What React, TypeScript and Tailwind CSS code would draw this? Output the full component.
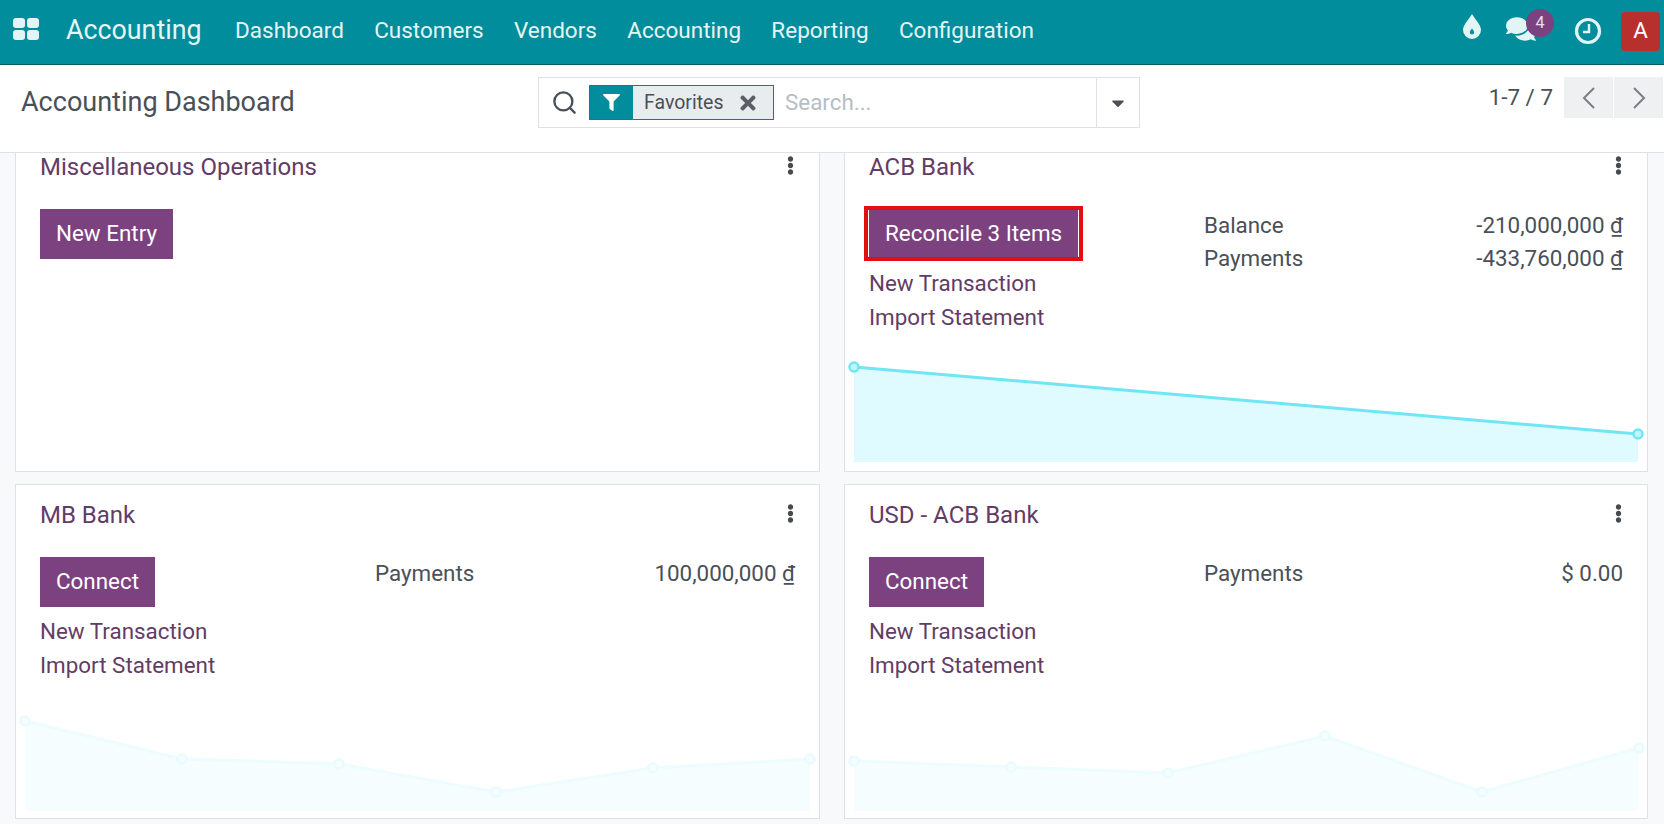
import React from "react";
import { Search } from "lucide-react";
import { FaComments, FaFilter, FaTimes, FaCaretDown, FaEllipsisV } from "react-icons/fa";

const menu = ["Dashboard", "Customers", "Vendors", "Accounting", "Reporting", "Configuration"];

type Pt = [number, number];

const Chart = ({ points, faded }: { points: Pt[]; faded?: boolean }) => {
  const line = points.map((p) => p.join(",")).join(" ");
  const last = points[points.length - 1];
  const area = `${points[0][0]},100 ${line} ${last[0]},100`;
  return (
    <svg width="786" height="100" viewBox="0 0 786 100" className="shrink-0 overflow-visible">
      <g opacity={faded ? 0.3 : 1}>
        <polygon points={area} fill="#dffbff" />
        <polyline points={line} fill="none" stroke={faded ? "#c5f6fc" : "#6ee6f4"} strokeWidth="3" />
        {points.map((p, i) => (
          <circle
            key={i}
            cx={p[0]}
            cy={p[1]}
            r="4.5"
            fill={faded ? "#dffbff" : "#c0f5fc"}
            stroke={faded ? "#b5f3fb" : "#6ee6f4"}
            strokeWidth="2.5"
          />
        ))}
      </g>
    </svg>
  );
};

const Stat = ({ label, value }: { label: string; value: string }) => (
  <div className="flex justify-between h-[33px] items-center text-[#495057]">
    <span>{label}</span>
    <span>{value}</span>
  </div>
);

type CardProps = {
  title: string;
  button: string;
  stats?: { label: string; value: string }[];
  links?: boolean;
  marked?: boolean;
  clipped?: boolean;
  chart?: Pt[];
  faded?: boolean;
};

const Card = ({ title, button, stats, links, marked, clipped, chart, faded }: CardProps) => (
  <div
    className={`flex flex-col bg-white border border-[#dee2e6] ${clipped ? "h-[319px] border-t-0" : "h-[335px] pt-[16px]"}`}
  >
    <div className="flex justify-between items-center h-[28px] pl-[24px] pr-[19px] text-[24px] text-[#633c66] shrink-0">
      <span>{title}</span>
      <FaEllipsisV className="text-[#454a4f] text-[19px] mb-[4px]" />
    </div>
    <div className="flex pl-[24px] pr-[24px] mt-[28px]">
      <div className="w-[335px] shrink-0">
        <div className="relative w-fit">
          <button className="block h-[50px] px-[16px] bg-[#7c4280] text-white">{button}</button>
          {marked && <div className="absolute -inset-x-[5px] -top-[3px] -bottom-[2px] border-4 border-[#e30d14]" />}
        </div>
        {links && (
          <div className="mt-[8px] text-[#633c66]">
            <div className="h-[34px] flex items-center">New Transaction</div>
            <div className="h-[34px] flex items-center">Import Statement</div>
          </div>
        )}
      </div>
      {stats && (
        <div className="flex-1">
          {stats.map((s) => (
            <Stat key={s.label} label={s.label} value={s.value} />
          ))}
        </div>
      )}
    </div>
    {chart && (
      <div className={`mt-auto pl-[9px] ${clipped ? "pb-[9px]" : "pb-[7px]"}`}>
        <Chart points={chart} faded={faded} />
      </div>
    )}
  </div>
);

export default function App() {
  return (
    <div className="h-[824px] w-[1664px] overflow-hidden flex flex-col bg-[#f8f9fa] font-['Roboto',sans-serif] text-[22.4px]">
      <nav className="h-[65px] shrink-0 flex items-center bg-[#018d9b] border-b border-[#0a5a63] text-[#e6f5f6]">
        <div className="grid grid-cols-2 gap-[2px] w-[26px] h-[22px] ml-[13px] mb-[6px]">
          <span className="bg-[#e3f4f5] rounded-[3px]" />
          <span className="bg-[#e3f4f5] rounded-[3px]" />
          <span className="bg-[#e3f4f5] rounded-[3px]" />
          <span className="bg-[#e3f4f5] rounded-[3px]" />
        </div>
        <span className="ml-[27px] text-[26.8px] leading-none mb-[3px]">Accounting</span>
        <div className="flex gap-[30.3px] ml-[33.5px] mb-[3px] text-[22.5px]">
          {menu.map((m) => (
            <span key={m}>{m}</span>
          ))}
        </div>
        <div className="ml-auto flex items-center mb-[2px]">
          <svg width="20" height="26" viewBox="0 0 20 26" fill="#e3f4f5" className="mb-[10px]">
            <path
              fillRule="evenodd"
              d="M10 1C13 6.5 19 11.5 19 17a9 9 0 0 1-18 0C1 11.5 7 6.5 10 1ZM10 15.5c-1 1.6-2.2 2.6-2.2 3.8a2.2 2.2 0 0 0 4.4 0c0-1.2-1.2-2.2-2.2-3.8Z"
            />
          </svg>
          <div className="relative ml-[24px] mb-[4px]">
            <FaComments className="text-[#e3f4f5] text-[30px]" />
            <span className="absolute -top-[5px] left-[20px] w-[28px] h-[28px] rounded-full bg-[#7c4280] text-[#e6e0ea] text-[16px] flex items-center justify-center">
              4
            </span>
          </div>
          <svg width="28" height="28" viewBox="0 0 28 28" fill="none" stroke="#e3f4f5" className="ml-[38px]">
            <circle cx="14" cy="14" r="11.5" strokeWidth="3.2" />
            <path d="M15 7v8H9" strokeWidth="2.4" />
          </svg>
          <div className="ml-[19px] mr-[4px] w-[39px] h-[39px] rounded-[4px] bg-[#b8302e] text-white flex items-center justify-center">
            A
          </div>
        </div>
      </nav>

      <div className="h-[88px] shrink-0 flex bg-white border-b border-[#dee2e6] text-[#495057]">
        <div className="w-[538px] pl-[21px] pt-[18px] text-[27px] leading-[38px]">Accounting Dashboard</div>
        <div className="w-[602px] h-[51px] mt-[12px] flex border border-[#dee2e6]">
          <div className="flex-1 flex items-center pl-[12px]">
            <Search size={27} strokeWidth={2.1} className="text-[#495057]" />
            <div className="ml-[11px] h-[35px] flex border border-[#0f7f8d] text-[19.5px]">
              <span className="w-[43px] bg-[#018d9b] flex items-center justify-center">
                <FaFilter className="text-white text-[17px]" />
              </span>
              <span className="w-[140px] bg-[#e9ecef] flex items-center pl-[11px]">
                Favorites
                <FaTimes className="ml-[14px] text-[#5a6066] text-[22px]" />
              </span>
            </div>
            <span className="ml-[11px] text-[#b7bdc3]">Search...</span>
          </div>
          <div className="w-[43px] border-l border-[#dee2e6] flex items-center justify-center">
            <FaCaretDown className="text-[#495057] text-[20px]" />
          </div>
        </div>
        <div className="ml-auto flex pt-[12px] h-[53px]">
          <span className="mr-[11px] leading-[40px]">1-7 / 7</span>
          <div className="w-[49px] h-[41px] bg-[#eef0f1] flex items-center justify-center">
            <svg width="16" height="24" viewBox="0 0 16 24" fill="none" stroke="#7b7f83" strokeWidth="2">
              <path d="M13 2 3 12l10 10" />
            </svg>
          </div>
          <div className="w-[49px] h-[41px] ml-[1px] mr-[1px] bg-[#eef0f1] flex items-center justify-center">
            <svg width="16" height="24" viewBox="0 0 16 24" fill="none" stroke="#7b7f83" strokeWidth="2">
              <path d="m3 2 10 10L3 22" />
            </svg>
          </div>
        </div>
      </div>

      <div className="grid grid-cols-[805px_804px] gap-x-[24px] gap-y-[12px] pl-[15px] content-start">
        <Card title="Miscellaneous Operations" button="New Entry" clipped />
        <Card
          title="ACB Bank"
          button="Reconcile 3 Items"
          marked
          links
          clipped
          stats={[
            { label: "Balance", value: "-210,000,000 ₫" },
            { label: "Payments", value: "-433,760,000 ₫" },
          ]}
          chart={[
            [0, 5],
            [784, 72],
          ]}
        />
        <Card
          title="MB Bank"
          button="Connect"
          links
          stats={[{ label: "Payments", value: "100,000,000 ₫" }]}
          faded
          chart={[
            [0, 10],
            [157, 48],
            [314, 53],
            [471, 81],
            [628, 57],
            [785, 48],
          ]}
        />
        <Card
          title="USD - ACB Bank"
          button="Connect"
          links
          stats={[{ label: "Payments", value: "$ 0.00" }]}
          faded
          chart={[
            [0, 50],
            [157, 56],
            [314, 62],
            [471, 25],
            [628, 81],
            [785, 37],
          ]}
        />
      </div>
    </div>
  );
}
